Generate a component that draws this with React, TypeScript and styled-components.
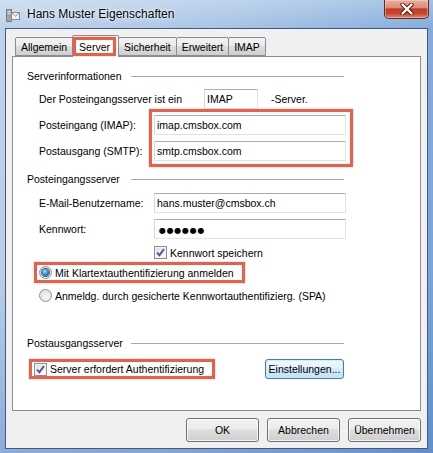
import React from "react";
import styled, { createGlobalStyle } from "styled-components";

const GlobalStyle = createGlobalStyle`
  html, body { margin: 0; padding: 0; }
  body {
    font-family: "Liberation Sans", Arial, sans-serif;
    font-size: 10.5px;
    color: #000;
  }
`;

const RED = "#ef5d49";

const Window = styled.div`
  width: 433px;
  height: 453px;
  box-sizing: border-box;
  display: flex;
  flex-direction: column;
  overflow: hidden;
  background:
    linear-gradient(180deg, rgba(255, 255, 255, 0.28) 0px, rgba(255, 255, 255, 0) 28px),
    linear-gradient(180deg, rgba(60, 110, 190, 0) 60%, rgba(60, 110, 190, 0.35) 100%),
    linear-gradient(100deg, #bdd3eb 0%, #a8c4e5 45%, #8bb1de 78%, #73a0d6 100%);
`;

const TitleBar = styled.div`
  height: 28px;
  flex: none;
  display: flex;
  align-items: flex-start;
`;

const TitleIcon = styled.svg`
  flex: none;
  margin: 8px 0 0 6px;
`;

const TitleText = styled.div`
  flex: 1;
  margin: 7px 0 0 7px;
  font-size: 12px;
  line-height: 15px;
  text-shadow: 0 0 6px rgba(255, 255, 255, 0.9), 0 0 2px rgba(255, 255, 255, 0.9);
`;

const CloseButton = styled.div`
  flex: none;
  width: 45px;
  height: 19px;
  margin-right: 4px;
  box-sizing: border-box;
  border: 1px solid #5e2a22;
  border-top: none;
  border-radius: 0 0 5px 5px;
  background: linear-gradient(180deg, #eab0a2 0%, #dc8a76 42%, #c23b20 50%, #c6472c 75%, #dd8a70 100%);
  box-shadow: inset 0 0 0 1px rgba(255, 220, 210, 0.45);
  display: flex;
  align-items: center;
  justify-content: center;
`;

const Client = styled.div`
  flex: 1;
  margin: 0 5px 4px 5px;
  border: 1px solid #46597a;
  background: #f0f0f0;
  padding: 6px;
  display: flex;
  flex-direction: column;
`;

const TabStrip = styled.div`
  height: 21px;
  flex: none;
  display: flex;
  align-items: flex-end;
  padding-left: 3px;
  position: relative;
  z-index: 1;
`;

const Tab = styled.div<{ $active?: boolean }>`
  position: relative;
  box-sizing: border-box;
  height: ${(p) => (p.$active ? 22 : 19)}px;
  margin: 0 -1px ${(p) => (p.$active ? -1 : 0)}px 0;
  padding: ${(p) => (p.$active ? "1px 2px 0 0" : "0 5px")};
  border: 1px solid #898c95;
  border-bottom: ${(p) => (p.$active ? "none" : "1px solid #898c95")};
  border-radius: 2px 2px 0 0;
  background: ${(p) =>
    p.$active ? "#fff" : "linear-gradient(180deg, #f3f3f3 0%, #ebebeb 45%, #dddddd 50%, #cfcfcf 100%)"};
  z-index: ${(p) => (p.$active ? 2 : 1)};
  display: flex;
  align-items: ${(p) => (p.$active ? "flex-start" : "center")};
  white-space: nowrap;
`;

const Highlight = styled.div`
  box-sizing: border-box;
  border: 3px solid ${RED};
  box-shadow: 0 0 1px rgba(200, 60, 40, 0.5);
`;

const TabFrame = styled(Highlight)`
  height: 19px;
  padding: 0 3px;
  display: flex;
  align-items: center;
`;

const Panel = styled.div`
  flex: 1;
  box-sizing: border-box;
  background: #fff;
  border: 1px solid #898c95;
  padding: 12px 0 0 14px;
  display: flex;
  flex-direction: column;
`;

const SectionHeader = styled.div<{ $top: number }>`
  margin-top: ${(p) => p.$top}px;
  height: 14px;
  line-height: 14px;
  display: grid;
  grid-template-columns: 104px 213px;
  align-items: center;
`;

const Rule = styled.div`
  height: 1px;
  background: #a9a9a9;
`;

const SectionBody = styled.div`
  padding-left: 12px;
  display: flex;
  flex-direction: column;
`;

const Row = styled.div<{ $top: number }>`
  margin-top: ${(p) => p.$top}px;
  display: flex;
  align-items: center;
`;

const Label = styled.div<{ $width: number }>`
  width: ${(p) => p.$width}px;
  flex: none;
  line-height: 20px;
  white-space: nowrap;
`;

const Suffix = styled.div`
  margin-left: 13px;
`;

const TextBox = styled.div<{ $width: number }>`
  width: ${(p) => p.$width}px;
  height: 20px;
  flex: none;
  box-sizing: border-box;
  border: 1px solid #dfe3e9;
  border-top-color: #abadb3;
  border-left-color: #d6d9df;
  border-radius: 1px;
  background: #fff;
  padding: 0 2px;
  line-height: 18px;
  white-space: nowrap;
  overflow: hidden;
`;

const Dots = styled.span`
  font-family: "DejaVu Sans", sans-serif;
  font-size: 8px;
  letter-spacing: 0.7px;
  padding-left: 2px;
`;

const LabelColumn = styled.div`
  width: 110px;
  flex: none;
  padding-top: 6px;
  display: flex;
  flex-direction: column;
  gap: 6px;
  align-self: flex-start;
`;

const FieldFrame = styled(Highlight)`
  padding: 3px 4px 3px 2px;
  display: flex;
  flex-direction: column;
  gap: 6px;
`;

const OptionFrame = styled(Highlight)<{ $h?: number }>`
  margin-left: -5px;
  padding: 0 8px 0 2px;
  height: ${(p) => p.$h ?? 21}px;
  display: flex;
  align-items: center;
`;

const Option = styled.div<{ $indent?: number }>`
  height: 15px;
  margin-left: ${(p) => p.$indent ?? 0}px;
  display: flex;
  align-items: center;
  gap: 3px;
  white-space: nowrap;
`;

const Box = styled.span`
  width: 13px;
  height: 13px;
  flex: none;
  box-sizing: border-box;
  border: 1px solid #8e8f8f;
  background: linear-gradient(135deg, #dadada 0%, #f2f2f2 60%, #ffffff 100%);
  box-shadow: inset 0 0 0 1px #f4f4f4;
  display: flex;
  align-items: center;
  justify-content: center;
`;

const RadioDot = styled.span`
  width: 13px;
  height: 13px;
  flex: none;
  box-sizing: border-box;
  border: 1px solid #8e8f8f;
  border-radius: 50%;
  background: radial-gradient(circle at 60% 60%, #f6f6f6 0%, #dcdcdc 100%);
  display: flex;
  align-items: center;
  justify-content: center;
`;

const RadioInner = styled.span`
  width: 7px;
  height: 7px;
  border-radius: 50%;
  background: radial-gradient(circle at 40% 35%, #b8e4fb 0%, #3a8fd0 45%, #124f86 100%);
  box-shadow: 0 0 0 1px #2b5d8c;
`;

const SplitRow = styled.div<{ $top: number }>`
  margin-top: ${(p) => p.$top}px;
  width: 310px;
  margin-left: -5px;
  display: flex;
  align-items: center;
  justify-content: space-between;
`;

const Button = styled.div<{ $width: number; $height: number; $focused?: boolean }>`
  width: ${(p) => p.$width}px;
  height: ${(p) => p.$height}px;
  flex: none;
  box-sizing: border-box;
  border: 1px solid ${(p) => (p.$focused ? "#3c7fb1" : "#707070")};
  border-radius: 3px;
  background: ${(p) =>
    p.$focused
      ? "linear-gradient(180deg, #f3f9fd 0%, #e4f2fb 45%, #d3eaf8 50%, #c3e2f5 100%)"
      : "linear-gradient(180deg, #f2f2f2 0%, #ebebeb 45%, #dddddd 50%, #cfcfcf 100%)"};
  box-shadow: inset 0 0 0 1px ${(p) => (p.$focused ? "rgba(200,235,252,0.9)" : "rgba(255,255,255,0.75)")};
  display: flex;
  align-items: center;
  justify-content: center;
  white-space: nowrap;
`;

const ButtonRow = styled.div`
  margin-top: 7px;
  height: 24px;
  flex: none;
  display: flex;
  justify-content: flex-end;
  gap: 8px;
`;

function Check() {
  return (
    <svg width="9" height="9" viewBox="0 0 9 9">
      <path d="M1 4.6 L3.4 7.2 L8 1.2" fill="none" stroke="#4a5c90" strokeWidth="1.9" />
    </svg>
  );
}

function CheckBox({ children }: { children: React.ReactNode }) {
  return (
    <>
      <Box>
        <Check />
      </Box>
      <span>{children}</span>
    </>
  );
}

export default function App() {
  return (
    <>
      <GlobalStyle />
      <Window>
        <TitleBar>
          <TitleIcon width="14" height="15" viewBox="0 0 14 15">
            <rect x="0.5" y="1.5" width="5" height="12" fill="#a3a3a3" stroke="#7d7d7d" />
            <rect x="1.5" y="3" width="3" height="1" fill="#e6e6e6" />
            <rect x="1.5" y="5" width="3" height="1" fill="#e6e6e6" />
            <rect x="5.5" y="4.5" width="8" height="7" fill="#f2f2f2" stroke="#8c8c8c" />
            <path d="M5.5 4.5 L9.5 8.3 L13.5 4.5" fill="none" stroke="#8c8c8c" />
          </TitleIcon>
          <TitleText>Hans Muster Eigenschaften</TitleText>
          <CloseButton>
            <svg width="16" height="12" viewBox="0 0 16 12">
              <path d="M3.5 1.5 L12.5 10.5 M12.5 1.5 L3.5 10.5" stroke="#4b1a12" strokeWidth="4.2" strokeLinecap="round" />
              <path d="M3.5 1.5 L12.5 10.5 M12.5 1.5 L3.5 10.5" stroke="#ffffff" strokeWidth="2.4" strokeLinecap="round" />
            </svg>
          </CloseButton>
        </TitleBar>

        <Client>
          <TabStrip>
            <Tab>Allgemein</Tab>
            <Tab $active>
              <TabFrame>Server</TabFrame>
            </Tab>
            <Tab>Sicherheit</Tab>
            <Tab>Erweitert</Tab>
            <Tab>IMAP</Tab>
          </TabStrip>

          <Panel>
            <SectionHeader $top={0}>
              <span>Serverinformationen</span>
              <Rule />
            </SectionHeader>
            <SectionBody>
              <Row $top={6}>
                <Label $width={165}>Der Posteingangsserver ist ein</Label>
                <TextBox $width={54}>IMAP</TextBox>
                <Suffix>-Server.</Suffix>
              </Row>
              <Row $top={0}>
                <LabelColumn>
                  <Label $width={110}>Posteingang (IMAP):</Label>
                  <Label $width={110}>Postausgang (SMTP):</Label>
                </LabelColumn>
                <FieldFrame>
                  <TextBox $width={192}>imap.cmsbox.com</TextBox>
                  <TextBox $width={192}>smtp.cmsbox.com</TextBox>
                </FieldFrame>
              </Row>
            </SectionBody>

            <SectionHeader $top={5}>
              <span>Posteingangsserver</span>
              <Rule />
            </SectionHeader>
            <SectionBody>
              <Row $top={7}>
                <Label $width={115}>E-Mail-Benutzername:</Label>
                <TextBox $width={192}>hans.muster@cmsbox.ch</TextBox>
              </Row>
              <Row $top={6}>
                <Label $width={115}>Kennwort:</Label>
                <TextBox $width={192}>
                  <Dots>●●●●●●</Dots>
                </TextBox>
              </Row>
              <Row $top={6}>
                <Option $indent={115}>
                  <CheckBox>Kennwort speichern</CheckBox>
                </Option>
              </Row>
              <Row $top={2}>
                <OptionFrame>
                  <Option>
                    <RadioDot>
                      <RadioInner />
                    </RadioDot>
                    <span>Mit Klartextauthentifizierung anmelden</span>
                  </Option>
                </OptionFrame>
              </Row>
              <Row $top={5}>
                <Option>
                  <RadioDot />
                  <span>Anmeldg. durch gesicherte Kennwortauthentifizierg. (SPA)</span>
                </Option>
              </Row>
            </SectionBody>

            <SectionHeader $top={33}>
              <span>Postausgangsserver</span>
              <Rule />
            </SectionHeader>
            <SectionBody>
              <SplitRow $top={9}>
                <OptionFrame $h={20}>
                  <Option>
                    <CheckBox>Server erfordert Authentifizierung</CheckBox>
                  </Option>
                </OptionFrame>
                <Button $width={79} $height={20} $focused>
                  Einstellungen...
                </Button>
              </SplitRow>
            </SectionBody>
          </Panel>

          <ButtonRow>
            <Button $width={73} $height={24}>OK</Button>
            <Button $width={73} $height={24}>Abbrechen</Button>
            <Button $width={73} $height={24}>Übernehmen</Button>
          </ButtonRow>
        </Client>
      </Window>
    </>
  );
}
